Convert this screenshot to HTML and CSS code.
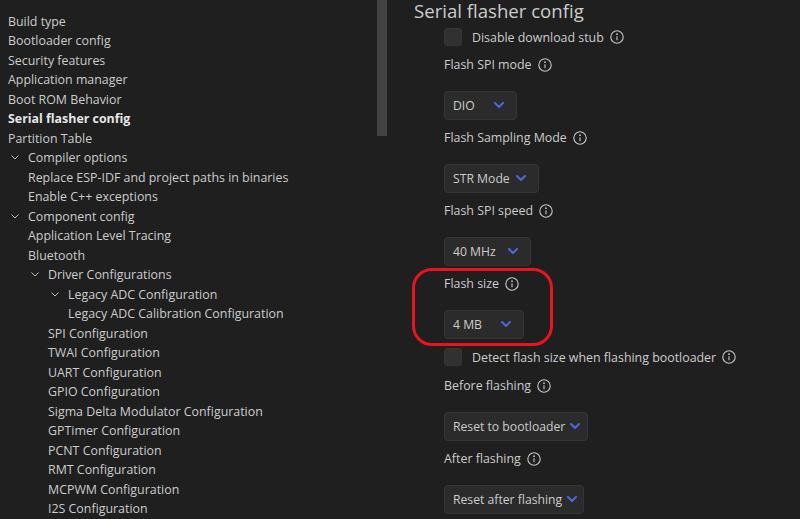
FILE: index.html
```html
<!DOCTYPE html>
<html lang="en">
<head>
<meta charset="utf-8">
<title>Serial flasher config</title>
<link rel="stylesheet" href="styles.css">
</head>
<body>
<div class="app">
  <nav class="tree">
    <div class="row d0">Build type</div>
    <div class="row d0">Bootloader config</div>
    <div class="row d0">Security features</div>
    <div class="row d0">Application manager</div>
    <div class="row d0">Boot ROM Behavior</div>
    <div class="row d0 active">Serial flasher config</div>
    <div class="row d0">Partition Table</div>
    <div class="row d0"><span class="twisty"><svg width="8" height="5" viewBox="0 0 8 5"><polyline points="0.5,0.5 4,4 7.5,0.5" /></svg></span>Compiler options</div>
    <div class="row d1">Replace ESP-IDF and project paths in binaries</div>
    <div class="row d1">Enable C++ exceptions</div>
    <div class="row d0"><span class="twisty"><svg width="8" height="5" viewBox="0 0 8 5"><polyline points="0.5,0.5 4,4 7.5,0.5" /></svg></span>Component config</div>
    <div class="row d1">Application Level Tracing</div>
    <div class="row d1">Bluetooth</div>
    <div class="row d1"><span class="twisty"><svg width="8" height="5" viewBox="0 0 8 5"><polyline points="0.5,0.5 4,4 7.5,0.5" /></svg></span>Driver Configurations</div>
    <div class="row d2"><span class="twisty"><svg width="8" height="5" viewBox="0 0 8 5"><polyline points="0.5,0.5 4,4 7.5,0.5" /></svg></span>Legacy ADC Configuration</div>
    <div class="row d3">Legacy ADC Calibration Configuration</div>
    <div class="row d2">SPI Configuration</div>
    <div class="row d2">TWAI Configuration</div>
    <div class="row d2">UART Configuration</div>
    <div class="row d2">GPIO Configuration</div>
    <div class="row d2">Sigma Delta Modulator Configuration</div>
    <div class="row d2">GPTimer Configuration</div>
    <div class="row d2">PCNT Configuration</div>
    <div class="row d2">RMT Configuration</div>
    <div class="row d2">MCPWM Configuration</div>
    <div class="row d2">I2S Configuration</div>
  </nav>
  <div class="scrollbar"><div class="thumb"></div></div>
  <main class="content">
    <h1 class="title">Serial flasher config</h1>
    <div class="items">
      <div class="check-row">
        <span class="checkbox"></span>
        <span class="check-label">Disable download stub</span>
        <svg class="info" width="14" height="14" viewBox="0 0 14 14"><circle cx="7" cy="7" r="6.2"/><circle class="dot" cx="7" cy="4.2" r="0.9"/><line x1="7" y1="6.2" x2="7" y2="10.3"/></svg>
      </div>

      <div class="field">
        <div class="label">Flash SPI mode <svg class="info" width="14" height="14" viewBox="0 0 14 14"><circle cx="7" cy="7" r="6.2"/><circle class="dot" cx="7" cy="4.2" r="0.9"/><line x1="7" y1="6.2" x2="7" y2="10.3"/></svg></div>
        <div class="select w-dio"><span>DIO</span><svg class="chev" width="10" height="7" viewBox="0 0 10 7"><polyline points="1,1 5,5 9,1"/></svg></div>
      </div>

      <div class="field">
        <div class="label">Flash Sampling Mode <svg class="info" width="14" height="14" viewBox="0 0 14 14"><circle cx="7" cy="7" r="6.2"/><circle class="dot" cx="7" cy="4.2" r="0.9"/><line x1="7" y1="6.2" x2="7" y2="10.3"/></svg></div>
        <div class="select w-str"><span>STR Mode</span><svg class="chev" width="10" height="7" viewBox="0 0 10 7"><polyline points="1,1 5,5 9,1"/></svg></div>
      </div>

      <div class="field">
        <div class="label">Flash SPI speed <svg class="info" width="14" height="14" viewBox="0 0 14 14"><circle cx="7" cy="7" r="6.2"/><circle class="dot" cx="7" cy="4.2" r="0.9"/><line x1="7" y1="6.2" x2="7" y2="10.3"/></svg></div>
        <div class="select w-mhz"><span>40 MHz</span><svg class="chev" width="10" height="7" viewBox="0 0 10 7"><polyline points="1,1 5,5 9,1"/></svg></div>
      </div>

      <div class="field highlighted">
        <div class="label">Flash size <svg class="info" width="14" height="14" viewBox="0 0 14 14"><circle cx="7" cy="7" r="6.2"/><circle class="dot" cx="7" cy="4.2" r="0.9"/><line x1="7" y1="6.2" x2="7" y2="10.3"/></svg></div>
        <div class="select w-mb"><span>4 MB</span><svg class="chev" width="10" height="7" viewBox="0 0 10 7"><polyline points="1,1 5,5 9,1"/></svg></div>
        <div class="ring"></div>
      </div>

      <div class="check-row second">
        <span class="checkbox"></span>
        <span class="check-label">Detect flash size when flashing bootloader</span>
        <svg class="info" width="14" height="14" viewBox="0 0 14 14"><circle cx="7" cy="7" r="6.2"/><circle class="dot" cx="7" cy="4.2" r="0.9"/><line x1="7" y1="6.2" x2="7" y2="10.3"/></svg>
      </div>

      <div class="field after-check">
        <div class="label">Before flashing <svg class="info" width="14" height="14" viewBox="0 0 14 14"><circle cx="7" cy="7" r="6.2"/><circle class="dot" cx="7" cy="4.2" r="0.9"/><line x1="7" y1="6.2" x2="7" y2="10.3"/></svg></div>
        <div class="select w-boot"><span>Reset to bootloader</span><svg class="chev" width="10" height="7" viewBox="0 0 10 7"><polyline points="1,1 5,5 9,1"/></svg></div>
      </div>

      <div class="field">
        <div class="label">After flashing <svg class="info" width="14" height="14" viewBox="0 0 14 14"><circle cx="7" cy="7" r="6.2"/><circle class="dot" cx="7" cy="4.2" r="0.9"/><line x1="7" y1="6.2" x2="7" y2="10.3"/></svg></div>
        <div class="select w-after"><span>Reset after flashing</span><svg class="chev" width="10" height="7" viewBox="0 0 10 7"><polyline points="1,1 5,5 9,1"/></svg></div>
      </div>
    </div>
  </main>
</div>
</body>
</html>
```

FILE: styles.css
```css
html, body {
  margin: 0;
  padding: 0;
  background: #1f1f1f;
  height: 100%;
  overflow: hidden;
}

body {
  font-family: "Open Sans", "Noto Sans", sans-serif;
  font-size: 12.4px;
  color: #cccccc;
}

.app {
  display: flex;
  height: 519px;
}

/* ---------- tree ---------- */
.tree {
  width: 377px;
  flex: none;
  padding-top: 11.5px;
  box-sizing: border-box;
}

.row {
  height: 19.5px;
  line-height: 19.5px;
  white-space: nowrap;
  display: flex;
  align-items: center;
}

.row.d0 { padding-left: 8px; }
.row.d1 { padding-left: 28px; }
.row.d2 { padding-left: 48px; }
.row.d3 { padding-left: 68px; }

.row .twisty {
  width: 20px;
  flex: none;
  display: inline-flex;
  align-items: center;
  padding-left: 3px;
  box-sizing: border-box;
}

.row .twisty svg {
  fill: none;
  stroke: #bdbdbd;
  stroke-width: 1;
}

.row.active {
  font-weight: 700;
  color: #e6e6e6;
}

/* ---------- scrollbar ---------- */
.scrollbar {
  width: 10px;
  flex: none;
}

.thumb {
  height: 136px;
  background: #434343;
}

/* ---------- content ---------- */
.content {
  flex: 1;
  padding-left: 27px;
}

.title {
  margin: 0;
  font-size: 18.6px;
  font-weight: 400;
  line-height: 22px;
  color: #cccccc;
}

.items {
  padding-left: 30px;
}

.check-row {
  display: flex;
  align-items: center;
  height: 18px;
  margin-top: 6px;
}

.check-row.second {
  margin-top: 9px;
}

.checkbox {
  width: 18px;
  height: 18px;
  box-sizing: border-box;
  background: #313131;
  border: 1px solid #363636;
  border-radius: 3px;
  flex: none;
}

.check-label {
  margin-left: 10px;
  margin-right: 6px;
}

.info {
  fill: none;
  stroke: #c8c8c8;
  stroke-width: 1.1;
  flex: none;
}

.info .dot {
  fill: #c8c8c8;
  stroke: none;
}

.field {
  margin-top: 9px;
}

.field + .field {
  margin-top: 8px;
}

.field.after-check {
  margin-top: 10px;
}

.label {
  height: 20px;
  line-height: 20px;
  display: flex;
  align-items: center;
  gap: 6px;
}

.select {
  margin-top: 16px;
  height: 29px;
  box-sizing: border-box;
  background: #2b2b2b;
  border: 1px solid #353535;
  border-radius: 4px;
  display: flex;
  align-items: center;
  justify-content: space-between;
  gap: 5px;
  padding: 0 12px 0 8px;
  white-space: nowrap;
  font-size: 12.2px;
}

.chev {
  fill: none;
  stroke: #4b66d6;
  stroke-width: 2.2;
  stroke-linecap: round;
  stroke-linejoin: round;
  flex: none;
}

.w-dio { width: 73px; }
.w-str { width: 95px; }
.w-mhz { width: 87px; }
.w-mb { width: 80px; }
.w-boot { width: 144px; }
.w-after { width: 140px; }

/* ---------- highlight annotation ---------- */
.highlighted {
  position: relative;
}

.ring {
  position: absolute;
  left: -32px;
  top: -6px;
  width: 141px;
  height: 78px;
  box-sizing: border-box;
  border: 3.5px solid #e8141f;
  border-radius: 20px;
  pointer-events: none;
}
```
